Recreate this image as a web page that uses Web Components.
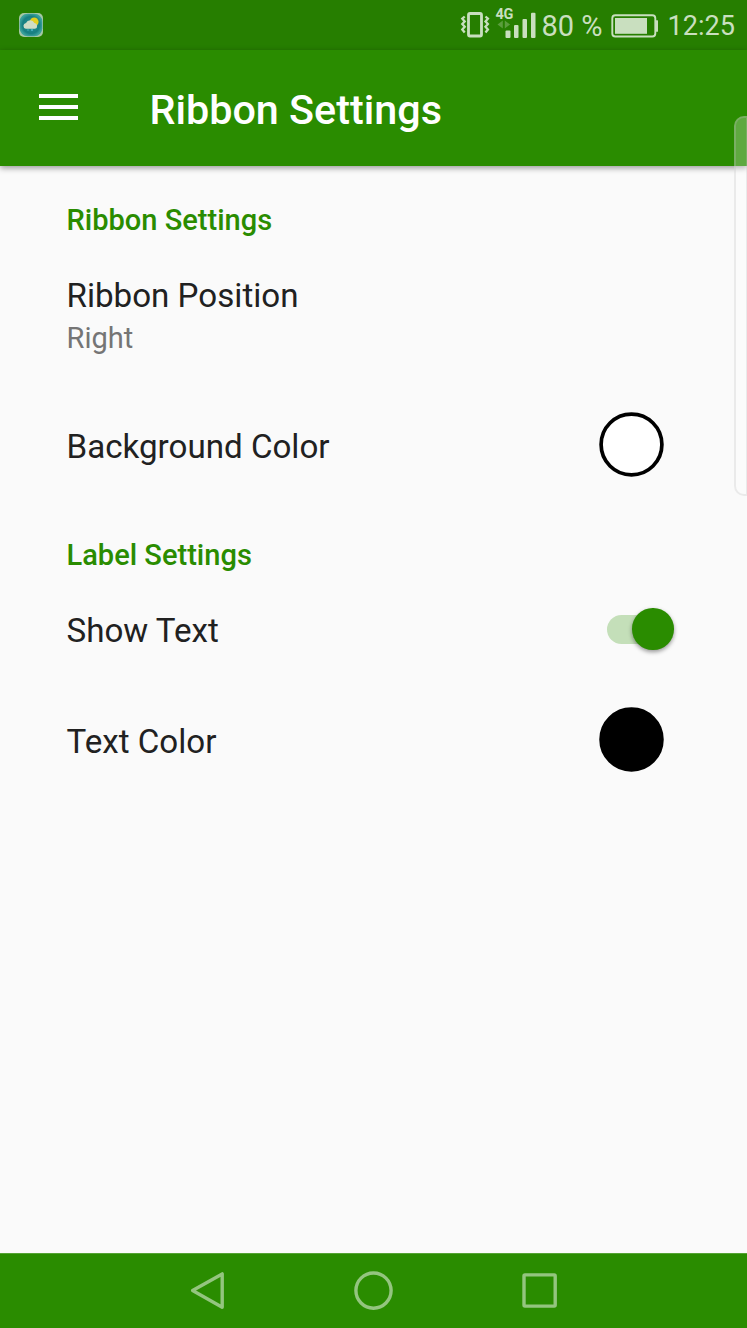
<!DOCTYPE html>
<html lang="en">
<head>
<meta charset="utf-8">
<title>Ribbon Settings</title>
<style>
    html, body {
        margin: 0;
        height: 1328px;
        overflow: hidden;
    }
    body {
        --accent: #2a8c00;
        background: #fafafa;
        color: #212121;
        font-family: Roboto, "Liberation Sans", sans-serif;
    }
</style>
</head>
<body>
<settings-screen></settings-screen>
<script>
class StatusBar extends HTMLElement {

    constructor() {
        super();
        this.shadowDOM = this.attachShadow({mode: "open"});
    }

    connectedCallback() {
        this.render();
    }

    render() {
        this.shadowDOM.innerHTML = `
        <style>
            :host {
                display: flex;
                align-items: center;
                box-sizing: border-box;
                height: 50px;
                padding: 0 12px 0 19px;
                background: #267e00;
                color: #c9dfbf;
                white-space: nowrap;
            }
            svg {
                display: block;
                flex: none;
            }
            .spacer {
                flex: 1;
            }
            .vibrate {
                margin-right: 5px;
            }
            .signal {
                margin-right: 5.5px;
            }
            .level {
                font-size: 29px;
                line-height: 50px;
                width: 69.5px;
                padding-top: 2px;
            }
            .battery {
                margin-right: 9.5px;
            }
            .clock {
                font-size: 27.1px;
                line-height: 50px;
                padding-top: 2px;
                width: 67.5px;
            }
        </style>
        <svg class="weather" width="24" height="50" viewBox="0 0 24 50">
            <defs>
                <radialGradient id="sky">
                    <stop offset="0" stop-color="#279396"/>
                    <stop offset="0.75" stop-color="#177f81"/>
                    <stop offset="1" stop-color="#39a09b"/>
                </radialGradient>
            </defs>
            <rect x="0" y="13" width="24" height="24" rx="5" fill="#a5c7a4"/>
            <rect x="0.7" y="13.7" width="22.6" height="22.6" rx="8" fill="url(#sky)"/>
            <circle cx="15.2" cy="21.8" r="4.4" fill="#e4cf20"/>
            <path d="M6.8 28.8a3 3 0 0 1 .2-5.9 4.6 4.6 0 0 1 8.4.2 2.9 2.9 0 0 1 .6 5.7z" fill="#cfdcc6"/>
            <path d="M9 29.5v1M13 29v2" stroke="#55b9cf" stroke-width="1.4"/>
        </svg>
        <span class="spacer"></span>
        <svg class="vibrate" width="30" height="50" viewBox="460 0 30 50" fill="none" stroke="#c9dfbf">
            <rect x="468.5" y="13.5" width="13" height="22.5" rx="1.5" stroke-width="2.8"/>
            <path d="M464.7 16.5l-2.4 2.2 2.4 2.7-2.4 2.7 2.4 2.7-2.4 2.7 2.4 3M485.5 16.5l2.4 2.2-2.4 2.7 2.4 2.7-2.4 2.7 2.4 2.7-2.4 3" stroke-width="2.3"/>
        </svg>
        <svg class="signal" width="41" height="50" viewBox="495 0 41 50" fill="#c9dfbf">
            <text x="495.4" y="18.8" font-size="14.5" font-weight="700" textLength="18">4G</text>
            <path d="M502.8 20.5v8l-5.3-4zM504.8 20.5v8l5.3-4z" fill="#5b9d3d"/>
            <rect x="505.5" y="30.5" width="5" height="7.5" rx="1"/>
            <rect x="514" y="25" width="4.5" height="13" rx="1"/>
            <rect x="522.5" y="19" width="4.5" height="19" rx="1"/>
            <rect x="531" y="12.7" width="4.5" height="25.3" rx="1"/>
        </svg>
        <span class="level">80 %</span>
        <svg class="battery" width="47" height="50" viewBox="611 0 47 50">
            <rect x="612.3" y="15.2" width="43" height="21.3" rx="3" fill="none" stroke="#c9dfbf" stroke-width="1.9"/>
            <rect x="615" y="18" width="32" height="15.8" fill="#c9dfbf"/>
            <path d="M656 20.2h1.3q.9 0 .9 1v9.6q0 1-.9 1H656z" fill="#c9dfbf"/>
        </svg>
        <span class="clock">12:25</span>
        `;
    }
}

class AppBar extends HTMLElement {

    constructor() {
        super();
        this.shadowDOM = this.attachShadow({mode: "open"});
    }

    connectedCallback() {
        this.render();
    }

    render() {
        this.shadowDOM.innerHTML = `
        <style>
            :host {
                display: flex;
                align-items: center;
                box-sizing: border-box;
                height: 116px;
                padding-left: 38.5px;
                background: var(--accent);
                box-shadow: 0 2px 6px rgba(0, 0, 0, 0.4);
                color: white;
            }
            .menu {
                display: grid;
                gap: 7px;
                width: 39px;
                margin: 0 72px 2px 0;
            }
            .menu i {
                height: 4px;
                background: white;
            }
            h1 {
                margin: 4px 0 0;
                font-size: 41.3px;
                font-weight: 500;
                line-height: 50px;
            }
        </style>
        <div class="menu"><i></i><i></i><i></i></div>
        <h1><slot></slot></h1>
        `;
    }
}

class SettingsCategory extends HTMLElement {

    constructor() {
        super();
        this.shadowDOM = this.attachShadow({mode: "open"});
    }

    connectedCallback() {
        this.render();
    }

    render() {
        this.shadowDOM.innerHTML = `
        <style>
            :host {
                display: flex;
                align-items: center;
                height: 68px;
                color: var(--accent);
                font-size: 29.05px;
                font-weight: 500;
            }
        </style>
        <slot></slot>
        `;
    }
}

class SettingsRow extends HTMLElement {

    constructor() {
        super();
        this.shadowDOM = this.attachShadow({mode: "open"});
    }

    connectedCallback() {
        this.render();
    }

    render() {
        this.shadowDOM.innerHTML = `
        <style>
            :host {
                display: flex;
                align-items: center;
                justify-content: space-between;
                height: 111px;
            }
            .title {
                font-size: 33.15px;
                line-height: 42px;
            }
            .summary {
                color: #757575;
                font-size: 29.05px;
                line-height: 42px;
            }
        </style>
        <div>
            <div class="title">${this.getAttribute("title-text")}</div>
            ${this.hasAttribute("summary") ? `<div class="summary">${this.getAttribute("summary")}</div>` : ""}
        </div>
        <slot></slot>
        `;
    }
}

class ColorSwatch extends HTMLElement {

    constructor() {
        super();
        this.shadowDOM = this.attachShadow({mode: "open"});
    }

    connectedCallback() {
        this.render();
    }

    render() {
        this.shadowDOM.innerHTML = `
        <style>
            :host {
                display: block;
                margin: 0 83px 4px 0;
            }
            svg {
                display: block;
            }
        </style>
        <svg width="65" height="65" viewBox="0 0 65 65">
            <circle cx="32.5" cy="32.5" r="30.4" fill="${this.getAttribute("color")}" stroke="black" stroke-width="3.7"/>
        </svg>
        `;
    }
}

class ToggleSwitch extends HTMLElement {

    constructor() {
        super();
        this.shadowDOM = this.attachShadow({mode: "open"});
    }

    connectedCallback() {
        this.render();
    }

    render() {
        this.shadowDOM.innerHTML = `
        <style>
            :host {
                display: flex;
                align-items: center;
                justify-content: flex-end;
                box-sizing: border-box;
                width: 66.5px;
                height: 29px;
                margin: 0 73.5px 4px 0;
                border-radius: 15px;
                background: linear-gradient(#c4dfb9, #c4dfb9) left / 45px 29px no-repeat;
            }
            .thumb {
                width: 41.5px;
                height: 41.5px;
                flex: none;
                border-radius: 50%;
                background: var(--accent);
                box-shadow: 0 2px 4px rgba(0, 0, 0, 0.4);
            }
        </style>
        <div class="thumb"></div>
        `;
    }
}

class NavigationBar extends HTMLElement {

    constructor() {
        super();
        this.shadowDOM = this.attachShadow({mode: "open"});
    }

    connectedCallback() {
        this.render();
    }

    render() {
        this.shadowDOM.innerHTML = `
        <style>
            :host {
                display: flex;
                align-items: center;
                justify-content: center;
                gap: 126px;
                box-sizing: border-box;
                height: 75px;
                padding-bottom: 1px;
                background: var(--accent);
                border-top: 1px solid #55a333;
            }
            svg {
                display: block;
                fill: none;
                stroke: #94c57f;
                stroke-width: 3.4;
                stroke-linejoin: round;
            }
        </style>
        <svg width="40" height="40" viewBox="0 0 40 40"><path d="M4.6 19.6L34.2 2.9V36.3z"/></svg>
        <svg width="40" height="40" viewBox="0 0 40 40"><circle cx="19.5" cy="19.6" r="17.6"/></svg>
        <svg width="40" height="40" viewBox="0 0 40 40"><rect x="4" y="3.9" width="31.2" height="31.2" rx="1"/></svg>
        `;
    }
}

class SettingsScreen extends HTMLElement {

    constructor() {
        super();
        this.shadowDOM = this.attachShadow({mode: "open"});
    }

    connectedCallback() {
        this.render();
    }

    render() {
        this.shadowDOM.innerHTML = `
        <style>
            :host {
                display: flex;
                flex-direction: column;
                position: relative;
                width: 747px;
                height: 1328px;
            }
            main {
                flex: 1;
                padding: 20px 0 0 66.5px;
            }
            .position {
                height: 125px;
                margin-bottom: 12px;
            }
            .labels {
                margin-top: 19px;
            }
            .show-text {
                height: 84px;
            }
            .text-color {
                margin-top: 13px;
            }
            /* edge panel handle, floats over the page */
            .edge-handle {
                position: absolute;
                top: 116px;
                right: 0;
                box-sizing: border-box;
                width: 13px;
                height: 380px;
                border: 2px solid rgba(190, 190, 190, 0.28);
                border-right-width: 1px;
                border-radius: 10px 0 0 10px;
                background: rgba(255, 255, 255, 0.25);
            }
        </style>
        <status-bar></status-bar>
        <app-bar>Ribbon Settings</app-bar>
        <main>
            <settings-category>Ribbon Settings</settings-category>
            <settings-row class="position" title-text="Ribbon Position" summary="Right"></settings-row>
            <settings-row title-text="Background Color"><color-swatch color="white"></color-swatch></settings-row>
            <settings-category class="labels">Label Settings</settings-category>
            <settings-row class="show-text" title-text="Show Text"><toggle-switch></toggle-switch></settings-row>
            <settings-row class="text-color" title-text="Text Color"><color-swatch color="black"></color-swatch></settings-row>
        </main>
        <navigation-bar></navigation-bar>
        <div class="edge-handle"></div>
        `;
    }
}

customElements.define("status-bar", StatusBar);
customElements.define("app-bar", AppBar);
customElements.define("settings-category", SettingsCategory);
customElements.define("settings-row", SettingsRow);
customElements.define("color-swatch", ColorSwatch);
customElements.define("toggle-switch", ToggleSwitch);
customElements.define("navigation-bar", NavigationBar);
customElements.define("settings-screen", SettingsScreen);
</script>
</body>
</html>
